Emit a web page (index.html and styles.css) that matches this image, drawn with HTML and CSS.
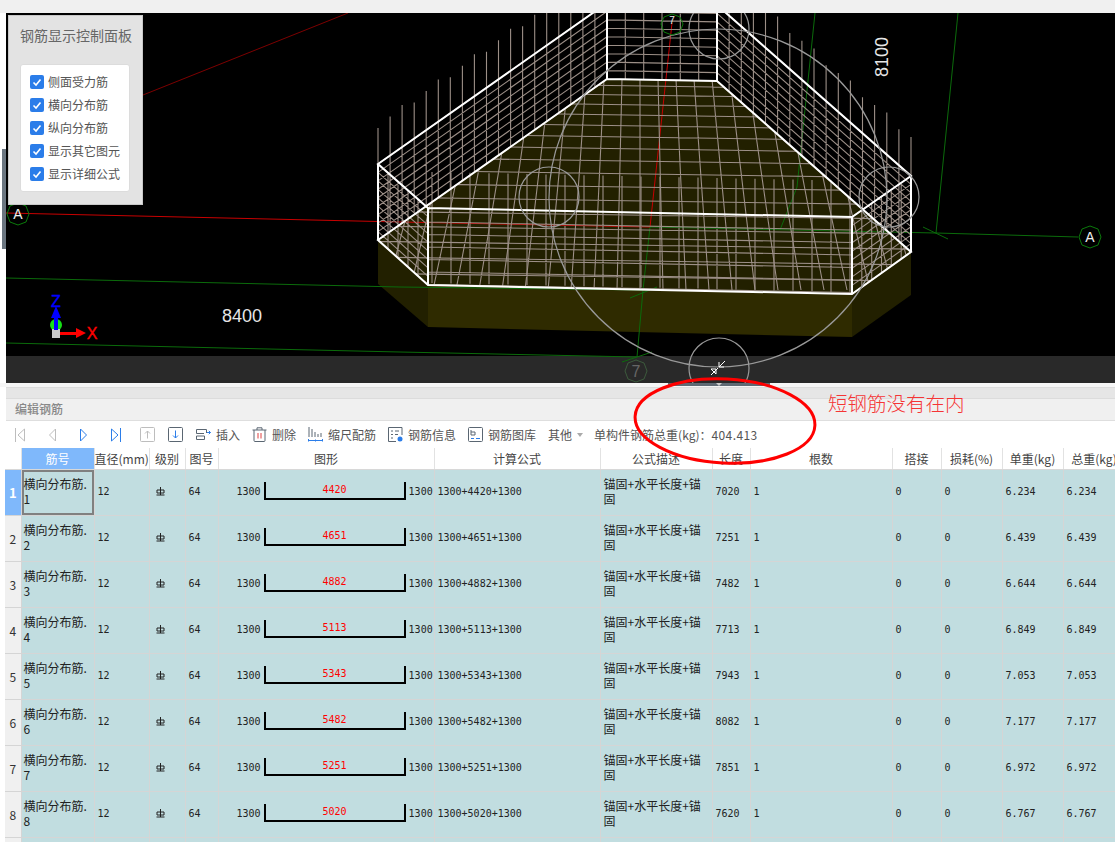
FILE: index.html
```html
<!DOCTYPE html>
<html lang="zh">
<head>
<meta charset="utf-8">
<title>编辑钢筋</title>
<link rel="stylesheet" href="styles.css">
</head>
<body>
<svg class="defs" width="0" height="0"><defs>
<symbol id="hrb" viewBox="0 0 9 9"><path class="ln-ink" d="M1 3h7v3H1zM4.500 0v8M0.500 8h8"/></symbol>
<clipPath id="floorclip"><polygon points="378,240 607,79 717,81 911,252 852,294 428,285"/></clipPath>
</defs></svg>
<div class="topbar"></div>
<div class="side-handle"></div>
<section class="viewer">
<svg class="scene" viewBox="6 13 1109 370" width="1109" height="370">
<rect class="f-black" x="6" y="13" width="1109" height="343"/>
<rect class="f-bar" x="6" y="356" width="1109" height="27"/>
<polygon class="f-side" points="378,240 428,285 428,327 378,284"/>
<polygon class="f-front" points="428,285 852,294 852,337 428,327"/>
<polygon class="f-side" points="852,294 911,252 911,295 852,337"/>
<polygon class="f-side" points="378,240 607,79 717,81 911,252 852,294 428,285"/>
<path class="ln-darkred" d="M143 95L348 13"/>
<path class="ln-green" d="M6 278L400 287L643 290M6 343L400 352L637 357M637 357L643 290L650 227L936 233L1078 237M936 233L958 13M815 13L797 187L780 230M923 227L948 239M630 298L657 287M622 362L652 352"/>
<path class="ln-red" d="M6 213L400 222L650 227L672 23"/>
<path id="rebarFloor" class="ln-rebar" clip-path="url(#floorclip)"/>
<path id="rebarWalls" class="ln-rebar"/>
<path class="ln-cage" d="M378 164L607 3L717 5L911 176L852 217L428 208ZM378 240L607 79L717 81L911 252L852 294L428 285ZM378 164V240M428 208V285M852 217V294M911 176V252M607 3V79M717 5V81M378 164L428 208M852 217L911 176"/>
<circle class="ln-arc" cx="718" cy="198" r="169"/>
<circle class="ln-arc" cx="549" cy="197" r="30"/>
<circle class="ln-arc" cx="719" cy="29" r="30"/>
<circle class="ln-arc" cx="889" cy="197" r="30"/>
<circle class="ln-arc" cx="719" cy="368" r="30"/>
<polygon class="ln-axis" points="18,203 26,206 29,214 26,222 18,225 10,222 7,214 10,206"/>
<polygon class="ln-axis" points="1090,226 1098,229 1101,237 1098,245 1090,248 1082,245 1079,237 1082,229"/>
<polygon class="ln-axis" points="672,14 680,17 683,24 680,32 672,35 664,32 661,24 664,17"/>
<polygon class="ln-axisdim" points="636,360 644,363 647,371 644,379 636,382 628,379 625,371 628,363"/>
<text class="t-axis" x="18" y="219">A</text>
<text class="t-axis" x="1090" y="242">A</text>
<text class="t-axissm" x="672" y="24">7</text>
<text class="t-axisdim" x="636" y="377">7</text>
<text class="t-dim" x="242" y="322">8400</text>
<text class="t-dim" transform="translate(888 57) rotate(-90)">8100</text>
<path class="ln-white" d="M711 375L718 368M711 369L716 374L716 369ZM725 361L719 367M719 362V367H724"/>
<circle class="f-gizmo" cx="56" cy="325" r="6"/>
<rect class="f-origin" x="52" y="329" width="8" height="9"/>
<path class="f-blue" d="M54 330V318H51L56 306L61 318H58V330Z"/>
<path class="f-red" d="M60 332H76V328L86 333L76 338V335H60Z"/>
<text class="t-z" x="56" y="307">Z</text>
<text class="t-x" x="92" y="339">X</text>
</svg>
<aside class="panel">
<h2 class="panel-title">钢筋显示控制面板</h2>
<ul class="panel-list">
<li class="check"><span class="box"><svg viewBox="0 0 14 14" width="14" height="14"><path class="ln-tick" d="M3.500 7.500L6 10L10.500 4.500"/></svg></span>侧面受力筋</li>
<li class="check"><span class="box"><svg viewBox="0 0 14 14" width="14" height="14"><path class="ln-tick" d="M3.500 7.500L6 10L10.500 4.500"/></svg></span>横向分布筋</li>
<li class="check"><span class="box"><svg viewBox="0 0 14 14" width="14" height="14"><path class="ln-tick" d="M3.500 7.500L6 10L10.500 4.500"/></svg></span>纵向分布筋</li>
<li class="check"><span class="box"><svg viewBox="0 0 14 14" width="14" height="14"><path class="ln-tick" d="M3.500 7.500L6 10L10.500 4.500"/></svg></span>显示其它图元</li>
<li class="check"><span class="box"><svg viewBox="0 0 14 14" width="14" height="14"><path class="ln-tick" d="M3.500 7.500L6 10L10.500 4.500"/></svg></span>显示详细公式</li>
</ul>
</aside>
</section>
<div class="splitter"><div class="split-handle"><span class="split-arrow"></span></div></div>
<main class="editor">
<div class="band"></div>
<header class="editor-title">编辑钢筋</header>
<div class="toolbar">
<div class="navs">
<svg width="10" height="14" viewBox="0 0 10 14"><path class="ln-off" d="M.5 0V14M9.500 1L3 7L9.500 13Z"/></svg>
<svg width="7" height="14" viewBox="0 0 7 14"><path class="ln-off" d="M6.500 1L.5 7L6.500 13Z"/></svg>
<svg width="7" height="14" viewBox="0 0 7 14"><path class="ln-on" d="M.5 1L6.500 7L.5 13Z"/></svg>
<svg width="10" height="14" viewBox="0 0 10 14"><path class="ln-on" d="M9.500 0V14M.5 1L7 7L.5 13Z"/></svg>
</div>
<div class="updown">
<svg width="15" height="15" viewBox="0 0 15 15"><rect class="ln-off" x=".5" y=".5" width="14" height="14" rx="1"/><path class="ln-off" d="M7.500 11.500V4M5 6.500L7.500 4L10 6.500"/></svg>
<svg width="15" height="15" viewBox="0 0 15 15"><rect class="ln-dark" x=".5" y=".5" width="14" height="14" rx="1"/><path class="ln-on" d="M7.500 3.500V11M5 8.500L7.500 11L10 8.500"/></svg>
</div>
<div class="action"><svg width="15" height="15" viewBox="0 0 15 15"><path class="ln-dark" d="M.5 2.500H10.500V6M.5 2.500V6.500H8M.5 9H8.500V12.500H.5Z"/><path class="ln-on" d="M11 5.500H14.500M12.800 3.800L14.500 5.500L12.800 7.200"/></svg><span>插入</span></div>
<div class="action"><svg width="15" height="15" viewBox="0 0 15 15"><path class="ln-dark" d="M2 3V13.500Q2 14.500 3 14.500H12Q13 14.500 13 13.500V3M.5 3H14.500M5 3V.8H10V3"/><path class="ln-del" d="M6 6V11.500M9 6V11.500"/></svg><span>删除</span></div>
<div class="action"><svg width="15" height="15" viewBox="0 0 15 15"><path class="ln-dark" d="M1 0V10M4 2V10M7 5V10M10 7V10M13 6V10"/><path class="ln-on" d="M.5 12V14.500M.5 13.500H14.500M14.500 12V14.500M7.500 12.500V14.500"/></svg><span>缩尺配筋</span></div>
<div class="action"><svg width="15" height="15" viewBox="0 0 15 15"><path class="ln-dark" d="M14 8V.5H.5V14.500H8M3 4H5M7 4H11M3 7.500H5M7 7.500H10M3 11H5"/><circle class="f-on" cx="12" cy="12" r="2.500"/></svg><span>钢筋信息</span></div>
<div class="action"><svg width="15" height="15" viewBox="0 0 15 15"><rect class="ln-dark" x=".5" y=".5" width="14" height="14" rx="1"/><path class="ln-dark" d="M3 3V8H7V5H3"/><path class="ln-on" d="M3 11.500H6M8 11.500H12"/></svg><span>钢筋图库</span></div>
<span class="other">其他</span><span class="caret"></span>
<span class="total">单构件钢筋总重(kg)：<span class="total-num">404.413</span></span>
</div>
<table class="grid">
<colgroup>
<col class="c-no"><col class="c-name"><col class="c-dia"><col class="c-lvl"><col class="c-fig"><col class="c-shape"><col class="c-calc"><col class="c-desc"><col class="c-len"><col class="c-cnt"><col class="c-lap"><col class="c-loss"><col class="c-unit"><col class="c-sum">
</colgroup>
<thead><tr><th></th><th class="th-active">筋号</th><th>直径(mm)</th><th>级别</th><th>图号</th><th>图形</th><th>计算公式</th><th>公式描述</th><th>长度</th><th>根数</th><th>搭接</th><th>损耗(%)</th><th>单重(kg)</th><th>总重(kg)</th></tr></thead>
<tbody>
<tr><td class="no no-active">1</td><td class="name name-active">横向分布筋.<br>1</td><td class="num">12</td><td class="lvl"><svg class="hrb-icon"><use href="#hrb"/></svg></td><td class="num">64</td><td><div class="shape"><span class="num">1300</span><div class="bend"><span class="bend-len">4420</span></div><span class="num">1300</span></div></td><td class="num calc">1300+4420+1300</td><td class="desc">锚固+水平长度+锚<br>固</td><td class="num">7020</td><td class="num">1</td><td class="num">0</td><td class="num">0</td><td class="num">6.234</td><td class="num">6.234</td></tr>
<tr><td class="no">2</td><td class="name">横向分布筋.<br>2</td><td class="num">12</td><td class="lvl"><svg class="hrb-icon"><use href="#hrb"/></svg></td><td class="num">64</td><td><div class="shape"><span class="num">1300</span><div class="bend"><span class="bend-len">4651</span></div><span class="num">1300</span></div></td><td class="num calc">1300+4651+1300</td><td class="desc">锚固+水平长度+锚<br>固</td><td class="num">7251</td><td class="num">1</td><td class="num">0</td><td class="num">0</td><td class="num">6.439</td><td class="num">6.439</td></tr>
<tr><td class="no">3</td><td class="name">横向分布筋.<br>3</td><td class="num">12</td><td class="lvl"><svg class="hrb-icon"><use href="#hrb"/></svg></td><td class="num">64</td><td><div class="shape"><span class="num">1300</span><div class="bend"><span class="bend-len">4882</span></div><span class="num">1300</span></div></td><td class="num calc">1300+4882+1300</td><td class="desc">锚固+水平长度+锚<br>固</td><td class="num">7482</td><td class="num">1</td><td class="num">0</td><td class="num">0</td><td class="num">6.644</td><td class="num">6.644</td></tr>
<tr><td class="no">4</td><td class="name">横向分布筋.<br>4</td><td class="num">12</td><td class="lvl"><svg class="hrb-icon"><use href="#hrb"/></svg></td><td class="num">64</td><td><div class="shape"><span class="num">1300</span><div class="bend"><span class="bend-len">5113</span></div><span class="num">1300</span></div></td><td class="num calc">1300+5113+1300</td><td class="desc">锚固+水平长度+锚<br>固</td><td class="num">7713</td><td class="num">1</td><td class="num">0</td><td class="num">0</td><td class="num">6.849</td><td class="num">6.849</td></tr>
<tr><td class="no">5</td><td class="name">横向分布筋.<br>5</td><td class="num">12</td><td class="lvl"><svg class="hrb-icon"><use href="#hrb"/></svg></td><td class="num">64</td><td><div class="shape"><span class="num">1300</span><div class="bend"><span class="bend-len">5343</span></div><span class="num">1300</span></div></td><td class="num calc">1300+5343+1300</td><td class="desc">锚固+水平长度+锚<br>固</td><td class="num">7943</td><td class="num">1</td><td class="num">0</td><td class="num">0</td><td class="num">7.053</td><td class="num">7.053</td></tr>
<tr><td class="no">6</td><td class="name">横向分布筋.<br>6</td><td class="num">12</td><td class="lvl"><svg class="hrb-icon"><use href="#hrb"/></svg></td><td class="num">64</td><td><div class="shape"><span class="num">1300</span><div class="bend"><span class="bend-len">5482</span></div><span class="num">1300</span></div></td><td class="num calc">1300+5482+1300</td><td class="desc">锚固+水平长度+锚<br>固</td><td class="num">8082</td><td class="num">1</td><td class="num">0</td><td class="num">0</td><td class="num">7.177</td><td class="num">7.177</td></tr>
<tr><td class="no">7</td><td class="name">横向分布筋.<br>7</td><td class="num">12</td><td class="lvl"><svg class="hrb-icon"><use href="#hrb"/></svg></td><td class="num">64</td><td><div class="shape"><span class="num">1300</span><div class="bend"><span class="bend-len">5251</span></div><span class="num">1300</span></div></td><td class="num calc">1300+5251+1300</td><td class="desc">锚固+水平长度+锚<br>固</td><td class="num">7851</td><td class="num">1</td><td class="num">0</td><td class="num">0</td><td class="num">6.972</td><td class="num">6.972</td></tr>
<tr><td class="no">8</td><td class="name">横向分布筋.<br>8</td><td class="num">12</td><td class="lvl"><svg class="hrb-icon"><use href="#hrb"/></svg></td><td class="num">64</td><td><div class="shape"><span class="num">1300</span><div class="bend"><span class="bend-len">5020</span></div><span class="num">1300</span></div></td><td class="num calc">1300+5020+1300</td><td class="desc">锚固+水平长度+锚<br>固</td><td class="num">7620</td><td class="num">1</td><td class="num">0</td><td class="num">0</td><td class="num">6.767</td><td class="num">6.767</td></tr>
<tr><td class="no"></td><td></td><td></td><td></td><td></td><td></td><td></td><td></td><td></td><td></td><td></td><td></td><td></td><td></td></tr>
</tbody>
</table>
</main>
<svg class="markup" viewBox="0 0 1115 842" width="1115" height="842"><ellipse class="ln-markup" cx="725" cy="421" rx="90" ry="42" transform="rotate(3 725 421)"/></svg>
<div class="note">短钢筋没有在内</div>
<script src="scene.js"></script>
</body>
</html>
```
FILE: styles.css
```css
* { box-sizing: border-box; }
html, body { margin: 0; padding: 0; }
body {
  width: 1115px; height: 842px; overflow: hidden; position: relative; background: #fff;
  font-family: "Noto Sans CJK SC", "Liberation Sans", sans-serif; font-size: 12px; color: #444;
}
.defs { position: absolute; }
.topbar { height: 13px; background: #f0f0f0; }
.side-handle { position: absolute; left: 2px; top: 149px; width: 4px; height: 100px; background: #6b7680; }
.viewer { position: relative; margin-left: 6px; height: 370px; }
.scene { display: block; }
.f-black { fill: #000; }
.f-bar { fill: #292929; }
.f-side { fill: #222000; }
.f-front { fill: #2f2b00; }
.f-gizmo { fill: #16e016; }
.f-origin { fill: #c8c8c8; }
.f-blue { fill: #0000ff; }
.f-red { fill: #ff0000; }
.f-on { fill: #2b7de9; }
.ln-darkred { stroke: #7d0000; stroke-width: 1; fill: none; }
.ln-red { stroke: #c80000; stroke-width: 1; fill: none; }
.ln-green { stroke: #0b6b0b; stroke-width: 1; fill: none; }
.ln-rebar { stroke: #9c8f87; stroke-width: 1.100; fill: none; }
.ln-cage { stroke: #fff; stroke-width: 2; fill: none; }
.ln-arc { stroke: #999; stroke-width: 1.200; fill: none; }
.ln-axis { stroke: #0b7a0b; stroke-width: 1; fill: none; }
.ln-axisdim { stroke: #3c5a3c; stroke-width: 1; fill: none; }
.ln-white { stroke: #fff; stroke-width: 1; fill: none; }
.ln-ink { stroke: #222; stroke-width: 1; fill: none; }
.ln-tick { stroke: #fff; stroke-width: 1.600; fill: none; }
.ln-off { stroke: #bdbdbd; stroke-width: 1; fill: none; }
.ln-on { stroke: #2b7de9; stroke-width: 1; fill: none; }
.ln-dark { stroke: #5a6672; stroke-width: 1; fill: none; }
.ln-del { stroke: #e04040; stroke-width: 1; fill: none; }
.ln-markup { stroke: #f00; stroke-width: 3; fill: none; }
.t-axis { fill: #eee; font: 14px "Liberation Sans", sans-serif; text-anchor: middle; }
.t-axissm { fill: #eee; font: 10px "Liberation Sans", sans-serif; text-anchor: middle; }
.t-axisdim { fill: #666; font: 16px "Liberation Sans", sans-serif; text-anchor: middle; }
.t-dim { fill: #e6e6e6; font: 18px "Liberation Sans", sans-serif; text-anchor: middle; }
.t-z { fill: #0000ff; stroke: #0000ff; stroke-width: .4; font: 16px "Liberation Sans", sans-serif; text-anchor: middle; }
.t-x { fill: #ff0000; stroke: #ff0000; stroke-width: .4; font: 16px "Liberation Sans", sans-serif; text-anchor: middle; }

.panel {
  position: absolute; left: 2px; top: 2px; width: 135px; height: 190px;
  background: #e3e3e3; border: 1px solid #c8c8c8; padding: 9px 11px 0;
}
.panel-title { margin: 0; font-size: 14px; font-weight: 400; line-height: 20px; color: #666; white-space: nowrap; text-align: center; }
.panel-list {
  list-style: none; margin: 19px 0 0; padding: 5px 0 0 9px; height: 128px; width: 110px;
  background: #fff; border: 1px solid #dcdcdc; border-radius: 3px;
}
.check { display: flex; align-items: center; height: 23px; gap: 4px; color: #555; white-space: nowrap; }
.box { width: 14px; height: 14px; background: #2b7de9; border-radius: 2px; display: block; }
.box svg { display: block; }

.splitter { position: relative; height: 4px; background: #f6f6f6; }
.split-handle { position: absolute; left: 668px; top: 0; width: 102px; height: 3px; background: #5f6a74; display: flex; justify-content: center; }
.split-arrow { border: 3px solid transparent; border-top-color: #ccc; border-bottom: 0; height: 3px; }

.editor { margin-left: 6px; }
.band { height: 12px; background: #e6e6e6; border-top: 1px solid #dcdcdc; border-bottom: 1px solid #dcdcdc; }
.editor-title { height: 22px; padding-left: 9px; line-height: 20px; background: #f0f0f0; border-bottom: 1px solid #dedede; color: #888; font-weight: 500; }
.toolbar { height: 27px; padding-left: 9px; display: flex; align-items: center; background: #fff; color: #555; white-space: nowrap; }
.toolbar svg { display: block; flex: none; }
.navs { display: flex; gap: 24px; }
.updown { display: flex; gap: 13px; margin: 0 13px 0 19px; }
.action { display: flex; align-items: center; gap: 5px; margin-right: 12px; }
.caret { margin: 0 11px 0 5px; border: 3px solid transparent; border-top: 4px solid #aaa; border-bottom: 0; }
.total-num { letter-spacing: .4px; }

.grid { table-layout: fixed; width: 1119px; border-collapse: collapse; margin-left: -1px; }
.c-no { width: 16px; } .c-name { width: 73px; } .c-dia { width: 55px; } .c-lvl { width: 36px; }
.c-fig { width: 33px; } .c-shape { width: 216px; } .c-calc { width: 166px; } .c-desc { width: 112px; }
.c-len { width: 38px; } .c-cnt { width: 142px; } .c-lap { width: 49px; } .c-loss { width: 61px; }
.c-unit { width: 61px; } .c-sum { width: 62px; }
.grid th {
  height: 21px; padding: 0; font-weight: 400; color: #444; background: #fff; white-space: nowrap;
  border-right: 1px solid #e2e2e2; border-bottom: 1px solid #d8d8d8;
}
.grid .th-active { background: #7fb8fb; color: #fff; }
.grid td {
  height: 46px; padding: 0 0 2px 3px; background: #c1dde0; color: #222; line-height: 15px;
  border-right: 1px solid #d5d5d5; border-bottom: 1px solid #d5d5d5; white-space: nowrap; overflow: hidden;
}
.grid .no { padding: 0; background: #f0f0f0; text-align: center; color: #333; }
.grid .no-active { background: #7fb8fb; color: #fff; font-weight: 700; font-size: 13px; }
.grid .name { color: #222; padding-left: 2px; }
.grid .name-active { box-shadow: inset 0 0 0 2px #808080; }
.grid .num { font-family: "DejaVu Sans Mono", monospace; font-size: 10px; color: #222; }
.lvl { text-align: left; }
.hrb-icon { width: 9px; height: 9px; display: block; margin-left: 3px; }
.shape { display: flex; align-items: center; gap: 3px; padding-left: 15px; }
.bend {
  width: 142px; height: 18px; border: 2px solid #000; border-top: 0;
  text-align: center; font: 10px/16px "DejaVu Sans Mono", monospace; color: #f00;
}
.grid .desc { font-size: 12px; line-height: 15px; }
.markup { position: absolute; left: 0; top: 0; pointer-events: none; }
.note { position: absolute; left: 828px; top: 390px; font-size: 19.500px; line-height: 26px; font-weight: 300; color: #f53535; white-space: nowrap; }
```
FILE: scene.js
```js
(function () {
  function line(a, b) { return "M" + a[0].toFixed(1) + " " + a[1].toFixed(1) + "L" + b[0].toFixed(1) + " " + b[1].toFixed(1); }
  function lerp(a, b, t) { return [a[0] + (b[0] - a[0]) * t, a[1] + (b[1] - a[1]) * t]; }
  // wall between two vertical edges; bars stick out above the top line
  function wall(tl, tr, bl, br, nu, nv, stick) {
    var d = "", i;
    for (i = 0; i <= nu; i++) {
      var t = i / nu, top = lerp(tl, tr, t), bot = lerp(bl, br, t);
      d += line([top[0], top[1] - (stick ? 36 + (i % 3) * 3 : 0)], bot);
    }
    for (i = 0; i <= nv; i++) {
      var s = i / nv;
      d += line(lerp(tl, bl, s), lerp(tr, br, s));
    }
    return d;
  }
  var walls = "";
  walls += wall([378, 164], [607, 3], [378, 240], [607, 79], 19, 9, true);
  walls += wall([607, 3], [717, 5], [607, 79], [717, 81], 6, 9, false);
  walls += wall([717, 5], [911, 176], [717, 81], [911, 252], 16, 9, true);
  walls += wall([378, 164], [428, 208], [378, 240], [428, 285], 5, 9, false);
  walls += wall([852, 217], [911, 176], [852, 294], [911, 252], 6, 9, false);
  var i;
  for (i = 0; i <= 22; i++) {
    var x = 432 + i * 19;
    walls += line([x, 172 + i * 0.4], [x, 283 + i * 0.4]);
  }
  for (i = 0; i <= 5; i++) {
    var y = 222 + i * 12.5;
    walls += line([428, y], [852, y + 8]);
  }
  document.getElementById("rebarWalls").setAttribute("d", walls);

  var floor = "";
  for (i = -14; i <= 14; i++) {
    floor += line([640 + i * 18, 79], [640 + i * 23, 290]);
  }
  for (i = 0; i <= 17; i++) {
    var yy = 85 + i * (9 + 0.25 * i);
    floor += line([370, yy - 3], [920, yy + 5]);
  }
  document.getElementById("rebarFloor").setAttribute("d", floor);
})();
```
